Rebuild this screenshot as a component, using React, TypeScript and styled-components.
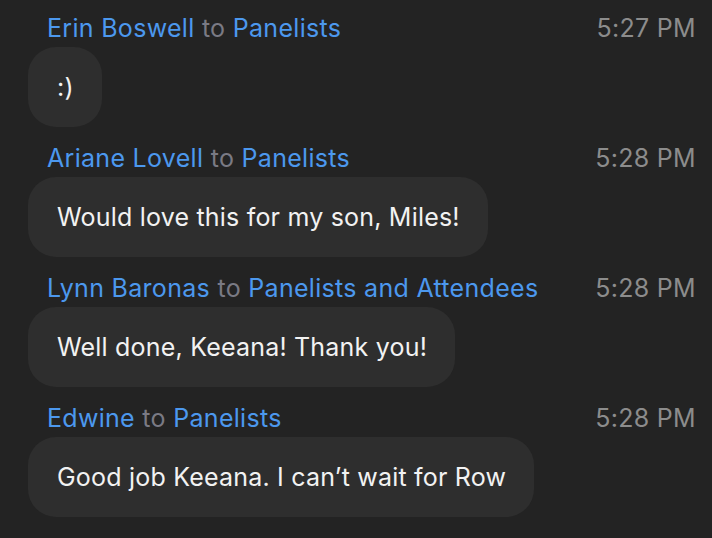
import React from "react";
import styled, { createGlobalStyle } from "styled-components";

const Global = createGlobalStyle`
  html, body { margin: 0; padding: 0; background: #232323; overflow: hidden; }
  body { font-family: Inter, "Noto Sans", sans-serif; }
`;

const Feed = styled.div`
  width: 712px;
  height: 538px;
  overflow: hidden;
  box-sizing: border-box;
  padding: 14px 16px 0 28px;
  display: flex;
  flex-direction: column;
  gap: 17px;
  background: #232323;
`;

const Message = styled.div`
  display: flex;
  flex-direction: column;
  align-items: flex-start;
  gap: 5px;
`;

const Header = styled.div`
  align-self: stretch;
  display: flex;
  justify-content: space-between;
  align-items: baseline;
  padding-left: 19px;
  font-size: 25px;
  line-height: 28px;
  letter-spacing: 0.3px;
  white-space: nowrap;
`;

const Names = styled.div`
  color: #4c98ee;
`;

const To = styled.span`
  color: #7a7a84;
`;

const Time = styled.span`
  color: #8c8c8c;
`;

const Bubble = styled.div`
  box-sizing: border-box;
  height: 80px;
  display: flex;
  align-items: center;
  padding: 0 28px 0 29px;
  border-radius: 28px;
  background: #2e2e2e;
  color: #f2f2f2;
  font-size: 25px;
  letter-spacing: 0.2px;
  white-space: nowrap;
`;

const messages = [
  { from: "Erin Boswell", to: "Panelists", time: "5:27 PM", text: ":)" },
  { from: "Ariane Lovell", to: "Panelists", time: "5:28 PM", text: "Would love this for my son, Miles!" },
  { from: "Lynn Baronas", to: "Panelists and Attendees", time: "5:28 PM", text: "Well done, Keeana! Thank you!" },
  { from: "Edwine", to: "Panelists", time: "5:28 PM", text: "Good job Keeana. I can\u2019t wait for Row" },
  { from: "Stephanie Hall", to: "Panelists", time: "5:28 PM", text: "Thank you!" },
];

export default function App() {
  return (
    <>
      <Global />
      <Feed>
        {messages.map((m, i) => (
          <Message key={i}>
            <Header>
              <Names>
                {m.from} <To>to</To> {m.to}
              </Names>
              <Time>{m.time}</Time>
            </Header>
            <Bubble>{m.text}</Bubble>
          </Message>
        ))}
      </Feed>
    </>
  );
}
